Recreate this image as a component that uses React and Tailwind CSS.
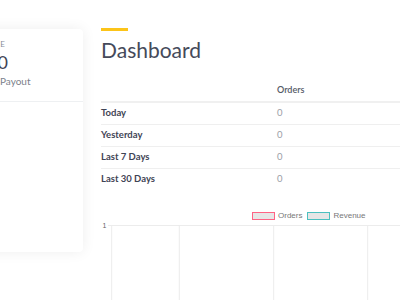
import React from "react";

const rows = [
  { label: "Today", orders: 0 },
  { label: "Yesterday", orders: 0 },
  { label: "Last 7 Days", orders: 0 },
  { label: "Last 30 Days", orders: 0 },
];

function BalanceCard() {
  return (
    <div className="pt-[29px] shrink-0">
      <div className="ml-[-60px] w-[143px] h-[223px] bg-white rounded shadow-[0_0_14px_rgba(0,0,0,0.07)]">
        <div className="pl-[22px] pt-[9px]">
          <div className="text-[8px] leading-[12px] tracking-[0.14em] uppercase text-[#8a8f99]">Balance</div>
          <div className="text-[18px] leading-[24px] text-[#3f4455]">$0.00</div>
          <div className="text-[10px] leading-[14px] text-[#7c818b]">Pending Payout</div>
        </div>
        <div className="mt-[13px] border-t border-[#eef0f2]" />
      </div>
    </div>
  );
}

function Chart() {
  const lines = [10.7, 78.3, 172.7, 266.7];
  return (
    <div>
      <div className="mt-[21px] pl-[151px] flex items-center h-[10px] font-['Liberation_Sans',sans-serif] text-[8px] text-[#777]">
        <span className="w-[23px] h-[8px] bg-[#e6e6e6] border-[1.5px] border-[#ff6384]" />
        <span className="ml-[3px]">Orders</span>
        <span className="ml-[5px] w-[23px] h-[8px] bg-[#e6e6e6] border-[1.5px] border-[#4bc0c0]" />
        <span className="ml-[3px]">Revenue</span>
      </div>
      <svg width="299" height="80" className="block">
        <line x1="7" y1="4.5" x2="299" y2="4.5" stroke="#ececec" strokeWidth="1" />
        {lines.map((x) => (
          <line key={x} x1={x} y1="4" x2={x} y2="80" stroke="#ececec" strokeWidth="1" />
        ))}
        <text x="1.5" y="6.5" fontSize="7" fill="#666" fontFamily="Liberation Sans, sans-serif">1</text>
      </svg>
    </div>
  );
}

export default function App() {
  return (
    <div className="w-[400px] h-[300px] overflow-hidden bg-white flex font-['Lato',sans-serif]">
      <BalanceCard />
      <div className="ml-[18px] pt-[28px] w-[420px] shrink-0">
        <div className="w-[27px] h-[3px] bg-[#fcc419]" />
        <h1 className="mt-[5px] text-[21px] leading-[28px] font-normal text-[#454a5a]">Dashboard</h1>
        <table className="mt-[15px] w-[420px] border-collapse text-left">
          <thead>
            <tr className="border-b-2 border-[#f0f0f0]">
              <th className="w-[176px] h-[23px] p-0" />
              <th className="w-[176px] h-[23px] p-0 text-[9px] font-semibold text-[#555a66]">Orders</th>
              <th className="h-[23px] p-0 text-[9px] font-semibold text-[#555a66]">Revenue</th>
            </tr>
          </thead>
          <tbody>
            {rows.map((r, i) => (
              <tr key={r.label} className={i < rows.length - 1 ? "border-b border-[#efefef]" : ""}>
                <td className="h-[22px] p-0 text-[9.5px] font-bold text-[#3f4455]">{r.label}</td>
                <td className="h-[22px] p-0 text-[9.5px] text-[#9a9ea6]">{r.orders}</td>
                <td className="h-[22px] p-0 text-[9.5px] text-[#9a9ea6]">$0.00</td>
              </tr>
            ))}
          </tbody>
        </table>
        <Chart />
      </div>
    </div>
  );
}
